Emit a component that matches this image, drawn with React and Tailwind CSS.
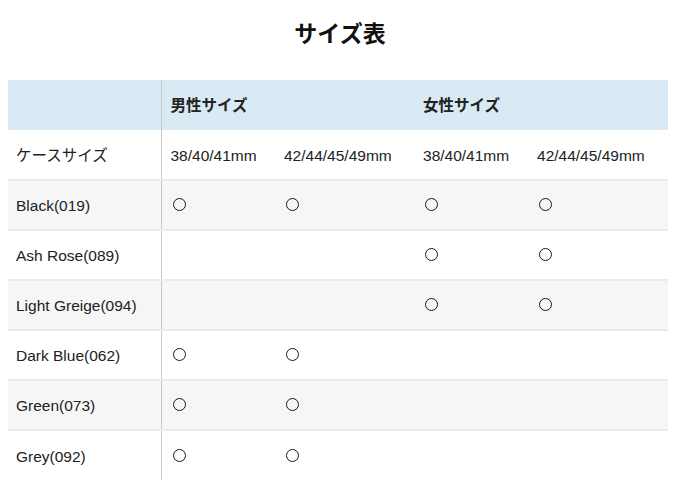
const rows = [
	{ name: 'Black(019)', marks: [true, true, true, true] },
	{ name: 'Ash Rose(089)', marks: [false, false, true, true] },
	{ name: 'Light Greige(094)', marks: [false, false, true, true] },
	{ name: 'Dark Blue(062)', marks: [true, true, false, false] },
	{ name: 'Green(073)', marks: [true, true, false, false] },
	{ name: 'Grey(092)', marks: [true, true, false, false] },
];

const sizes = ['38/40/41mm', '42/44/45/49mm', '38/40/41mm', '42/44/45/49mm'];

const Mark = () => (
	<span className="block w-[13px] h-[13px] ml-[2px] mb-[1px] rounded-full border-[1.7px] border-[#1a1a1a]"></span>
);

const App = () => {
	return (
		<div className="w-[680px] min-h-[499px] bg-white text-[#222] font-['Liberation_Sans','Noto_Sans_CJK_JP',sans-serif]">
			{/* title */}
			<h1 className="pt-[19px] h-[80px] text-center text-[23px] leading-[30px] font-bold text-[#111]">
				サイズ表
			</h1>
			{/* table */}
			<table className="ml-[8px] w-[660px] table-fixed border-collapse text-[15.5px]">
				<colgroup>
					<col className="w-[153px]" />
					<col className="w-[115px]" />
					<col className="w-[139px]" />
					<col className="w-[114px]" />
					<col className="w-[139px]" />
				</colgroup>
				<thead>
					<tr className="h-[50px] bg-[#d9eaf4] font-bold">
						<th className="border-r border-r-[#c8c8c8]"></th>
						<th colSpan={2} className="pl-[9px] pt-[2px] text-left">男性サイズ</th>
						<th colSpan={2} className="pl-[8px] pt-[2px] text-left">女性サイズ</th>
					</tr>
				</thead>
				<tbody>
					<tr className="h-[50px] bg-white border-b-2 border-b-[#ebebeb]">
						<td className="pl-[8px] pt-[2px] border-r border-r-[#c8c8c8]">ケースサイズ</td>
						{sizes.map((s, i) => (
							<td key={i} className={i === 0 ? 'pl-[9px] pt-[2px]' : 'pl-[8px] pt-[2px]'}>
								{s}
							</td>
						))}
					</tr>
					{rows.map((row, idx) => (
						<tr
							key={row.name}
							className={`h-[50px] ${idx % 2 === 0 ? 'bg-[#f6f6f6]' : 'bg-white'} ${idx < rows.length - 1 ? 'border-b-2 border-b-[#ebebeb]' : ''}`}
						>
							<td className="pl-[8px] pt-[2px] border-r border-r-[#c8c8c8]">{row.name}</td>
							{row.marks.map((m, i) => (
								<td key={i} className={i === 0 ? 'pl-[9px]' : 'pl-[8px]'}>
									{m && <Mark />}
								</td>
							))}
						</tr>
					))}
				</tbody>
			</table>
		</div>
	);
};

export default App;
